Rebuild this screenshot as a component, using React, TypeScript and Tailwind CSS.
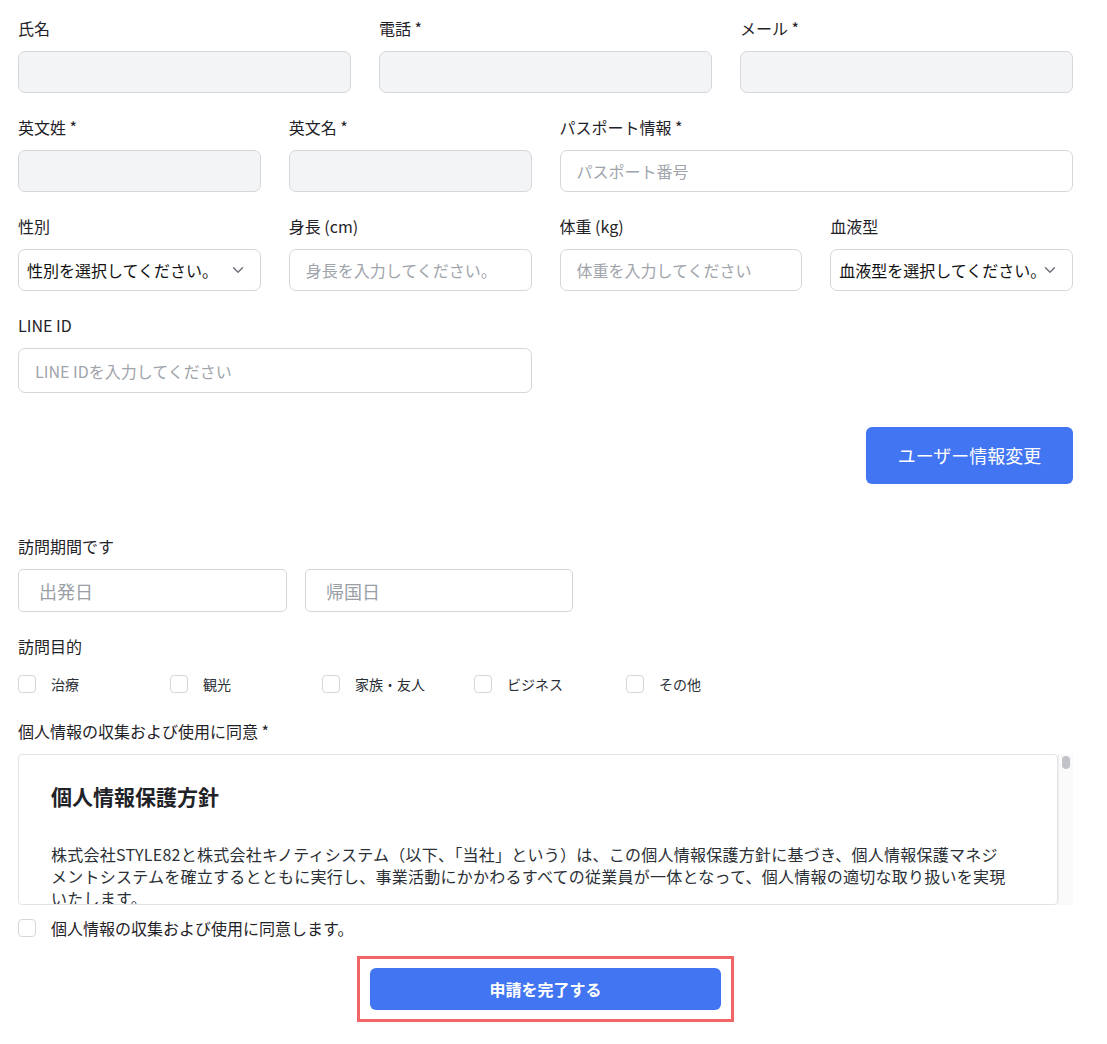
import React from 'react';

const FONT = { fontFamily: '"Noto Sans CJK JP", "Noto Sans", sans-serif' };

function Label({ children }: { children: React.ReactNode }) {
  return <label className="block text-[16px] leading-[20px] text-[#1f2328]">{children}</label>;
}

function Field({ label, children, className = '' }: { label: string; children: React.ReactNode; className?: string }) {
  return (
    <div className={`flex flex-col gap-[13px] ${className}`}>
      <Label>{label}</Label>
      {children}
    </div>
  );
}

function DisabledInput() {
  return (
    <input
      disabled
      className="h-[42px] w-full rounded-[7px] border border-[#d6d7dc] bg-[#f3f4f6] px-4 outline-none"
    />
  );
}

function TextInput({ placeholder, tall }: { placeholder: string; tall?: boolean }) {
  return (
    <input
      type="text"
      placeholder={placeholder}
      className={`${tall ? 'h-[45px]' : 'h-[42px]'} w-full rounded-[7px] border border-[#d6d7dc] bg-white px-4 text-[16px] text-[#1f2328] outline-none placeholder:text-[#a0a4ab]`}
    />
  );
}

function Select({ text }: { text: string }) {
  return (
    <div className="relative">
      <select className="h-[42px] w-full appearance-none overflow-hidden whitespace-nowrap rounded-[7px] border border-[#d6d7dc] bg-white pl-2 pr-0 text-[16px] text-[#111] outline-none">
        <option>{text}</option>
      </select>
      <svg
        className="pointer-events-none absolute right-[17px] top-1/2 -translate-y-1/2"
        width="12"
        height="8"
        viewBox="0 0 12 8"
        fill="none"
      >
        <path d="M1.5 1.8 6 6.2l4.5-4.4" stroke="#6b6f76" strokeWidth="1.4" strokeLinecap="round" strokeLinejoin="round" />
      </svg>
    </div>
  );
}

function Check({ label, size = 'sm' }: { label: string; size?: 'sm' | 'md' }) {
  return (
    <label className="flex items-center gap-[15px]">
      <span className="h-[18px] w-[18px] shrink-0 rounded-[4px] border border-[#d6d7dc] bg-white" />
      <span className={size === 'sm' ? 'text-[14px] leading-[18px] text-[#2b2f36]' : 'text-[16px] leading-[20px] text-[#1f2328]'}>
        {label}
      </span>
    </label>
  );
}

export default function App() {
  const purposes = ['治療', '観光', '家族・友人', 'ビジネス', 'その他'];

  return (
    <div className="min-h-[1044px] bg-white pl-[18px] pt-[18px]" style={FONT}>
      <div className="w-[1055px]">
        <div className="flex flex-col gap-6">
          <div className="grid grid-cols-3 gap-x-[28px]">
            <Field label="氏名"><DisabledInput /></Field>
            <Field label="電話 *"><DisabledInput /></Field>
            <Field label="メール *"><DisabledInput /></Field>
          </div>

          <div className="grid grid-cols-4 gap-x-[28px]">
            <Field label="英文姓 *"><DisabledInput /></Field>
            <Field label="英文名 *"><DisabledInput /></Field>
            <Field label="パスポート情報 *" className="col-span-2">
              <TextInput placeholder="パスポート番号" />
            </Field>
          </div>

          <div className="grid grid-cols-4 gap-x-[28px]">
            <Field label="性別"><Select text="性別を選択してください。" /></Field>
            <Field label="身長 (cm)"><TextInput placeholder="身長を入力してください。" /></Field>
            <Field label="体重 (kg)"><TextInput placeholder="体重を入力してください" /></Field>
            <Field label="血液型"><Select text="血液型を選択してください。" /></Field>
          </div>

          <div className="grid grid-cols-4 gap-x-[28px]">
            <Field label="LINE ID" className="col-span-2">
              <TextInput placeholder="LINE IDを入力してください" tall />
            </Field>
          </div>
        </div>

        <div className="mt-[34px] flex justify-end">
          <button className="h-[57px] w-[207px] rounded-[6px] bg-[#4275f2] text-[18px] text-white">
            ユーザー情報変更
          </button>
        </div>

        <div className="mt-[52px] flex flex-col gap-[13px]">
          <Label>訪問期間です</Label>
          <div className="flex gap-[18px]">
            <input
              placeholder="出発日"
              className="h-[43px] w-[269px] rounded-[5px] border border-[#d6d7dc] bg-white pl-5 text-[18px] outline-none placeholder:text-[#9a9ea5]"
            />
            <input
              placeholder="帰国日"
              className="h-[43px] w-[268px] rounded-[5px] border border-[#d6d7dc] bg-white pl-5 text-[18px] outline-none placeholder:text-[#9a9ea5]"
            />
          </div>
        </div>

        <div className="mt-6 flex flex-col gap-[19px]">
          <Label>訪問目的</Label>
          <div className="flex">
            {purposes.map((p) => (
              <div key={p} className="w-[152px]">
                <Check label={p} />
              </div>
            ))}
          </div>
        </div>

        <div className="mt-[28px] flex flex-col gap-[13px]">
          <Label>個人情報の収集および使用に同意 *</Label>
          <div className="flex h-[151px]">
            <div className="flex-1 overflow-hidden rounded-[4px] border border-[#e2e3e7] bg-white px-8 pt-[29px]">
              <h2 className="text-[21px] font-bold leading-[24px] text-[#1f2328]">個人情報保護方針</h2>
              <p className="mt-[35px] w-[957px] text-[16px] leading-[22px] tracking-[0.25px] text-[#2b2f36]">
                株式会社STYLE82と株式会社キノティシステム（以下、「当社」という）は、この個人情報保護方針に基づき、個人情報保護マネジメントシステムを確立するとともに実行し、事業活動にかかわるすべての従業員が一体となって、個人情報の適切な取り扱いを実現いたします。
              </p>
            </div>
            <div className="w-[15px] border-l border-[#eeeeee] bg-[#fafafa] pt-[2px]">
              <div className="mx-auto h-[13px] w-[8px] rounded-full bg-[#c2c3c8]" />
            </div>
          </div>
        </div>

        <div className="mt-[13px]">
          <Check label="個人情報の収集および使用に同意します。" size="md" />
        </div>

        <div className="mt-[18px] flex justify-center">
          <div className="border-[3px] border-[#f26565] px-[10px] py-[9px]">
            <button className="h-[42px] w-[351px] rounded-[6px] bg-[#4275f2] text-[16px] font-bold text-white">
              申請を完了する
            </button>
          </div>
        </div>
      </div>
    </div>
  );
}
